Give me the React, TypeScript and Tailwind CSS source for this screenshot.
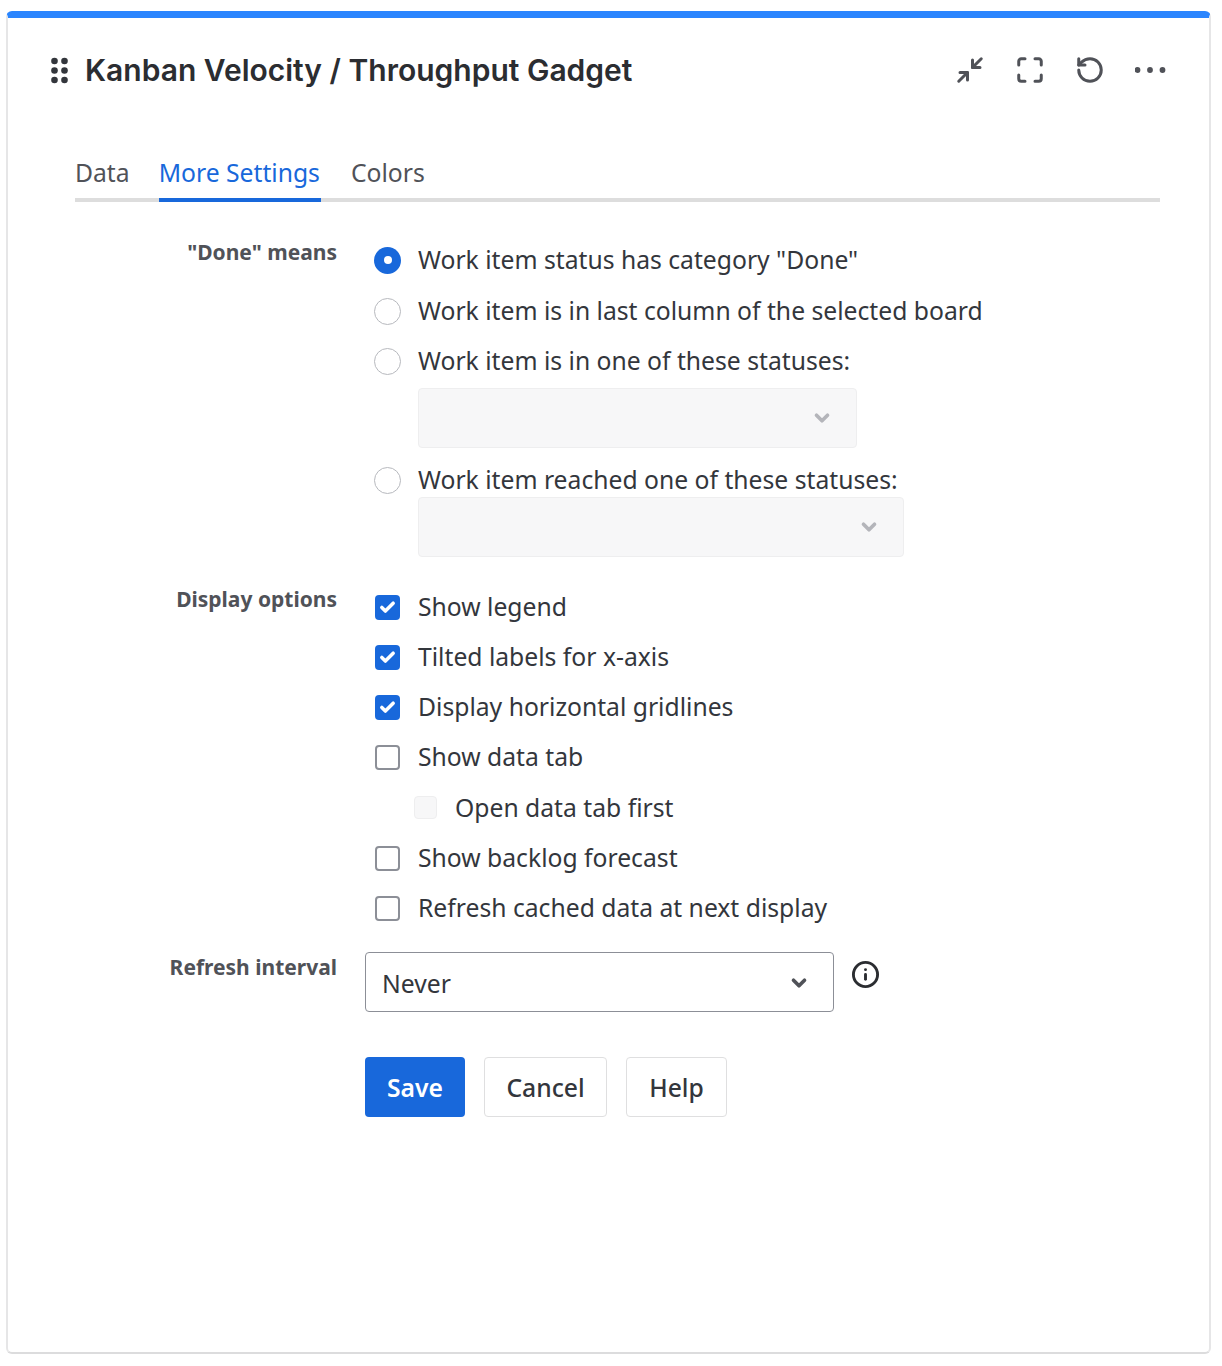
import { Check, ChevronDown, Info, Maximize, Minimize2, RotateCcw } from "lucide-react";

const body = "font-['Noto_Sans',sans-serif]";

const Radio = ({ checked, label, rowClass = "h-[50px]" }: { checked?: boolean; label: string; rowClass?: string }) => (
  <div className={`flex items-center ${rowClass}`}>
    <span
      className={
        checked
          ? "ml-[9px] flex h-[27px] w-[27px] items-center justify-center rounded-full bg-[#1868db]"
          : "ml-[9px] h-[27px] w-[27px] rounded-full border border-[#b7b9be] bg-white"
      }
    >
      {checked && <span className="h-[8px] w-[8px] rounded-full bg-white" />}
    </span>
    <span className="ml-[17px] text-[24.7px] text-[#33363c]">{label}</span>
  </div>
);

const CheckRow = ({ checked, label }: { checked?: boolean; label: string }) => (
  <div className="flex h-[50px] items-center">
    <span
      className={
        checked
          ? "ml-[10px] flex h-[25px] w-[25px] items-center justify-center rounded-[4px] bg-[#1868db]"
          : "ml-[10px] h-[25px] w-[25px] rounded-[4px] border-2 border-[#8c8f97] bg-white"
      }
    >
      {checked && <Check className="h-[17px] w-[17px] text-white" strokeWidth={5} />}
    </span>
    <span className="ml-[18px] text-[24.7px] text-[#33363c]">{label}</span>
  </div>
);

const DisabledSelect = ({ width }: { width: string }) => (
  <div
    className={`ml-[53px] flex h-[60px] items-center justify-end rounded-[4px] border border-[#eeeeef] bg-[#f7f7f8] pr-[23px] ${width}`}
  >
    <ChevronDown className="h-[22px] w-[22px] text-[#b4b5ba]" strokeWidth={4} />
  </div>
);

const FieldLabel = ({ children, top = "pt-[2px]" }: { children: string; top?: string }) => (
  <div className={`w-[329px] shrink-0 text-right text-[21px] font-bold text-[#505258] ${top}`}>{children}</div>
);

export default function App() {
  return (
    <div className={`h-[1366px] w-[1222px] bg-white pl-[6px] pt-[11px] ${body}`}>
      <div className="h-[1343px] w-[1205px] rounded-[6px] border-x-2 border-b-2 border-t-[7px] border-x-[#e6e6e7] border-b-[#dcdcdd] border-t-[#2a85fe]">
        {/* Header */}
        <div className="flex h-[104px] items-center pl-[42px] pr-[42px]">
          <svg className="h-[27px] w-[19px] fill-[#33363c]" viewBox="0 0 19 27">
            <circle cx="4.5" cy="4" r="3.3" />
            <circle cx="14.5" cy="4" r="3.3" />
            <circle cx="4.5" cy="13.5" r="3.3" />
            <circle cx="14.5" cy="13.5" r="3.3" />
            <circle cx="4.5" cy="23" r="3.3" />
            <circle cx="14.5" cy="23" r="3.3" />
          </svg>
          <h1 className="ml-[16px] flex-1 font-['Inter',sans-serif] text-[30px] font-semibold text-[#2b2d31]">
            Kanban Velocity / Throughput Gadget
          </h1>
          <div className="flex items-center gap-[30px] text-[#505258]">
            <Minimize2 className="h-[30px] w-[30px]" strokeWidth={2.4} />
            <Maximize className="h-[30px] w-[30px]" strokeWidth={2.4} />
            <RotateCcw className="h-[30px] w-[30px]" strokeWidth={2.4} />
            <svg className="h-[32px] w-[32px] fill-[#505258]" viewBox="0 0 32 32">
              <circle cx="2.5" cy="16" r="2.9" />
              <circle cx="15" cy="16" r="2.9" />
              <circle cx="27.5" cy="16" r="2.9" />
            </svg>
          </div>
        </div>

        {/* Tabs */}
        <div className="ml-[67px] mt-[32px] flex h-[48px] w-[1085px] gap-[30px] border-b-4 border-[#dddddd] text-[24.7px]">
          <span className="text-[#505258]">Data</span>
          <span className="-mb-[4px] -ml-[1px] border-b-4 border-[#1868db] pr-[1px] text-[#1868db]">More Settings</span>
          <span className="text-[#505258]">Colors</span>
        </div>

        {/* Done means */}
        <div className="mt-[33px] flex">
          <FieldLabel>"Done" means</FieldLabel>
          <div className="ml-[28px] flex flex-col">
            <Radio checked rowClass="h-[51px] pb-[1px]" label={'Work item status has category "Done"'} />
            <Radio label="Work item is in last column of the selected board" />
            <Radio label="Work item is in one of these statuses:" />
            <div className="mt-[2px]">
              <DisabledSelect width="w-[439px]" />
            </div>
            <div className="mt-[7px]">
              <Radio label="Work item reached one of these statuses:" />
            </div>
            <div className="-mt-[8px]">
              <DisabledSelect width="w-[486px]" />
            </div>
          </div>
        </div>

        {/* Display options */}
        <div className="mt-[25px] flex">
          <FieldLabel>Display options</FieldLabel>
          <div className="ml-[28px] flex flex-col">
            <CheckRow checked label="Show legend" />
            <CheckRow checked label="Tilted labels for x-axis" />
            <CheckRow checked label="Display horizontal gridlines" />
            <CheckRow label="Show data tab" />
            <div className="flex h-[51px] items-center">
              <span className="ml-[49px] h-[23px] w-[23px] rounded-[4px] border border-[#eeeeef] bg-[#f7f7f8]" />
              <span className="ml-[18px] text-[24.7px] text-[#33363c]">Open data tab first</span>
            </div>
            <CheckRow label="Show backlog forecast" />
            <CheckRow label="Refresh cached data at next display" />
          </div>
        </div>

        {/* Refresh interval */}
        <div className="mt-[19px] flex">
          <FieldLabel top="pt-0">Refresh interval</FieldLabel>
          <div className="ml-[28px] flex h-[60px] w-[469px] items-center justify-between rounded-[4px] border border-[#8c8f97] pl-[16px] pr-[23px] text-[24.7px] text-[#33363c]">
            <span className="mt-[4px]">Never</span>
            <ChevronDown className="mt-[2px] h-[22px] w-[22px] text-[#505258]" strokeWidth={4} />
          </div>
          <Info className="ml-[17px] mt-[8px] h-[29px] w-[29px] text-[#2b2d31]" strokeWidth={2.4} />
        </div>

        {/* Buttons */}
        <div className="ml-[357px] mt-[45px] flex gap-[19px] text-[24.7px]">
          <button className="h-[60px] w-[100px] rounded-[4px] bg-[#1868db] pt-[1px] font-semibold text-white">Save</button>
          <button className="h-[60px] w-[123px] rounded-[4px] border border-[#dfdfe0] pt-[1px] font-medium text-[#33363c]">Cancel</button>
          <button className="h-[60px] w-[101px] rounded-[4px] border border-[#dfdfe0] pt-[1px] font-medium text-[#33363c]">Help</button>
        </div>
      </div>
    </div>
  );
}
